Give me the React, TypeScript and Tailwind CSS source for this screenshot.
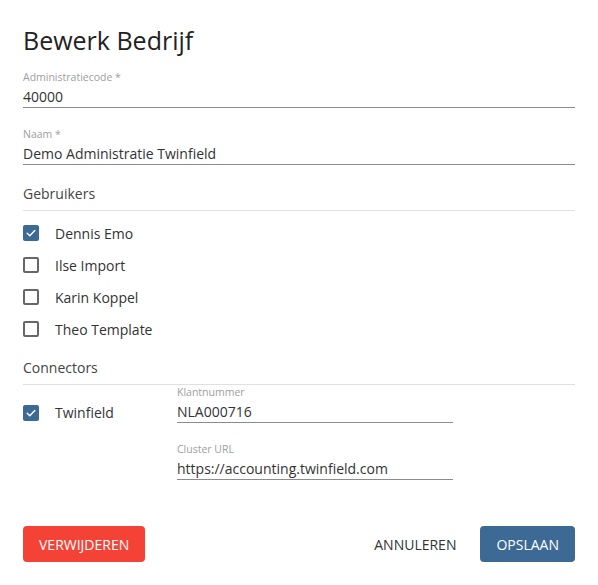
import { useState } from 'react'

type FieldProps = {
  label: string
  value: string
  className?: string
}

function Field({ label, value, className = '' }: FieldProps) {
  return (
    <div className={className}>
      <div className="text-[10.5px] leading-[14px] text-[#9e9e9e]">{label}</div>
      <div className="mt-[3px] text-[14px] leading-[20px] text-[#333] border-b border-[#8c8c8c]">{value}</div>
    </div>
  )
}

function Checkbox({ checked, onClick }: { checked: boolean; onClick: () => void }) {
  if (checked) {
    return (
      <button
        onClick={onClick}
        className="w-[16px] h-[16px] rounded-[2px] bg-[#3d6a94] flex items-center justify-center shrink-0"
      >
        <svg width="12" height="12" viewBox="0 0 12 12" fill="none">
          <path d="M2.2 6.2 L4.8 8.7 L9.8 3.4" stroke="white" strokeWidth="1.4" strokeLinecap="round" strokeLinejoin="round" />
        </svg>
      </button>
    )
  }
  return (
    <button
      onClick={onClick}
      className="w-[16px] h-[16px] rounded-[2px] border-2 border-[#666] bg-white shrink-0"
    />
  )
}

const initialUsers = [
  { name: 'Dennis Emo', checked: true },
  { name: 'Ilse Import', checked: false },
  { name: 'Karin Koppel', checked: false },
  { name: 'Theo Template', checked: false },
]

export default function App() {
  const [users, setUsers] = useState(initialUsers)
  const [twinfield, setTwinfield] = useState(true)

  const toggle = (i: number) =>
    setUsers(users.map((u, j) => (j === i ? { ...u, checked: !u.checked } : u)))

  return (
    <div className="w-[598px] h-[585px] bg-white px-[23px] font-['Open_Sans',sans-serif]">
      <h1 className="pt-[24px] text-[25px] leading-[32px] text-[#222]">Bewerk Bedrijf</h1>

      <Field className="mt-[14px]" label="Administratiecode *" value="40000" />
      <Field className="mt-[19px]" label="Naam *" value="Demo Administratie Twinfield" />

      {/* Gebruikers */}
      <div className="mt-[19px] text-[14px] leading-[20px] text-[#444] pb-[6px] border-b border-[#e0e0e0]">
        Gebruikers
      </div>
      <div className="mt-[6px]">
        {users.map((u, i) => (
          <div key={u.name} className="h-[32px] flex items-center gap-[16px]">
            <Checkbox checked={u.checked} onClick={() => toggle(i)} />
            <span className="text-[14px] text-[#333]">{u.name}</span>
          </div>
        ))}
      </div>

      {/* Connectors */}
      <div className="mt-[13px] text-[14px] leading-[20px] text-[#444] pb-[6px] border-b border-[#e0e0e0]">
        Connectors
      </div>
      <div className="flex">
        <div className="w-[154px] pt-[18px] flex items-center gap-[16px] h-fit">
          <Checkbox checked={twinfield} onClick={() => setTwinfield(!twinfield)} />
          <span className="text-[14px] leading-[20px] text-[#333]">Twinfield</span>
        </div>
        <div className="w-[276px]">
          <Field label="Klantnummer" value="NLA000716" />
          <Field className="mt-[19px]" label="Cluster URL" value="https://accounting.twinfield.com" />
        </div>
      </div>

      {/* Actions */}
      <div className="mt-[46px] flex items-center">
        <button className="h-[36px] px-[16px] rounded-[4px] bg-[#f44336] text-white text-[14px] uppercase">
          Verwijderen
        </button>
        <div className="ml-auto flex items-center gap-[8px]">
          <button className="h-[36px] px-[16px] text-[14px] text-[#333] uppercase">Annuleren</button>
          <button className="h-[36px] px-[16px] rounded-[4px] bg-[#3d6a94] text-white text-[14px] uppercase">
            Opslaan
          </button>
        </div>
      </div>
    </div>
  )
}
